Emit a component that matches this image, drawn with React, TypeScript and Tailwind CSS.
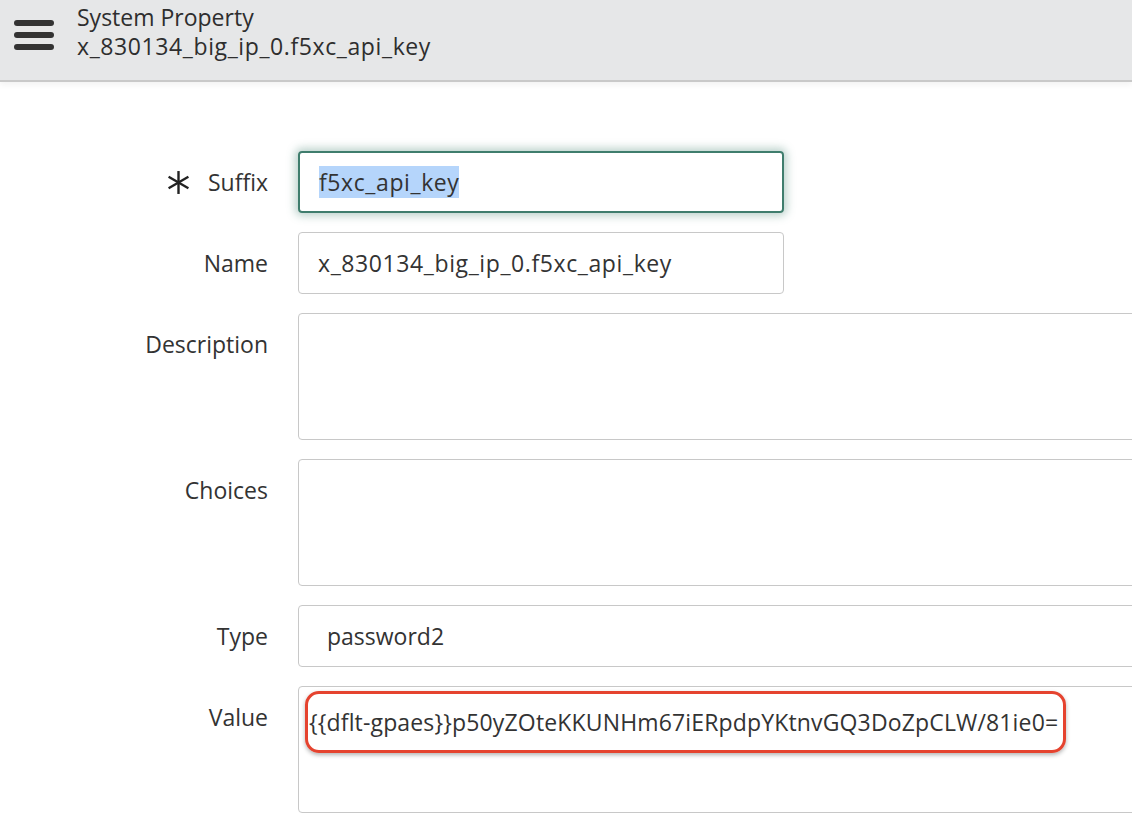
import React from "react";

const FONT = { fontFamily: "'Open Sans', Lato, 'Liberation Sans', sans-serif" };

function Label({ text, required }: { text: string; required?: boolean }) {
  return (
    <div className="h-[62px] flex items-center justify-end gap-[17px] text-[23px] text-[#333]">
      {required && (
        <svg width="25" height="25" viewBox="0 0 24 24" className="text-[#222]">
          <g stroke="currentColor" strokeWidth="2.3" strokeLinecap="butt">
            <line x1="12" y1="1" x2="12" y2="23" />
            <line x1="2.5" y1="6.5" x2="21.5" y2="17.5" />
            <line x1="2.5" y1="17.5" x2="21.5" y2="6.5" />
          </g>
        </svg>
      )}
      <span>{text}</span>
    </div>
  );
}

export default function App() {
  return (
    <div className="w-[1132px] h-[824px] overflow-hidden bg-white text-[#333]" style={FONT}>
      {/* Header */}
      <header className="h-[82px] bg-[#e6e7e8] border-b-2 border-[#c9c9c9] flex items-start shadow-[0_3px_6px_rgba(0,0,0,0.05)]">
        <div className="pl-[14px] pt-[20px] w-[77px]">
          <div className="flex flex-col gap-[6px] w-[40px]">
            <div className="h-[6px] rounded-full bg-[#333]" />
            <div className="h-[6px] rounded-full bg-[#333]" />
            <div className="h-[6px] rounded-full bg-[#333]" />
          </div>
        </div>
        <div className="pt-[3px] text-[23px] leading-[29px] text-[#2e2e2e]">
          <div>System Property</div>
          <div className="tracking-[0.6px]">x_830134_big_ip_0.f5xc_api_key</div>
        </div>
      </header>

      {/* Form */}
      <main className="pt-[69px] grid grid-cols-[268px_1fr] gap-x-[30px] gap-y-[19px]">
        <Label text="Suffix" required />
        <div>
          <div className="w-[486px] h-[62px] rounded-[4px] border-2 border-[#3f7d6d] shadow-[0_0_8px_3px_rgba(63,125,109,0.35)] flex items-center pl-[19px] text-[23px] tracking-[0.6px]">
            <span className="bg-[#b5d5fb] leading-[32px]">f5xc_api_key</span>
          </div>
        </div>

        <Label text="Name" />
        <div>
          <div className="w-[486px] h-[62px] rounded-[4px] border border-[#c8c8c8] flex items-center pl-[19px] text-[23px] tracking-[0.6px]">
            x_830134_big_ip_0.f5xc_api_key
          </div>
        </div>

        <Label text="Description" />
        <div className="w-[860px] h-[127px] rounded-[4px] border border-[#c8c8c8]" />

        <Label text="Choices" />
        <div className="w-[860px] h-[127px] rounded-[4px] border border-[#c8c8c8]" />

        <Label text="Type" />
        <div className="w-[860px] h-[62px] rounded-[4px] border border-[#c8c8c8] flex items-center pl-[28px] text-[23px]">
          password2
        </div>

        <Label text="Value" />
        <div className="w-[860px] h-[127px] rounded-[4px] border border-[#c8c8c8] pt-[4px] pl-[6px]">
          <div className="w-[761px] h-[62px] rounded-[14px] border-[3px] border-[#e5432f] shadow-[0_2px_4px_rgba(0,0,0,0.3)] flex items-center pl-[1px] text-[23px] tracking-[0.15px]">
            {"{{dflt-gpaes}}p50yZOteKKUNHm67iERpdpYKtnvGQ3DoZpCLW/81ie0="}
          </div>
        </div>
      </main>
    </div>
  );
}
